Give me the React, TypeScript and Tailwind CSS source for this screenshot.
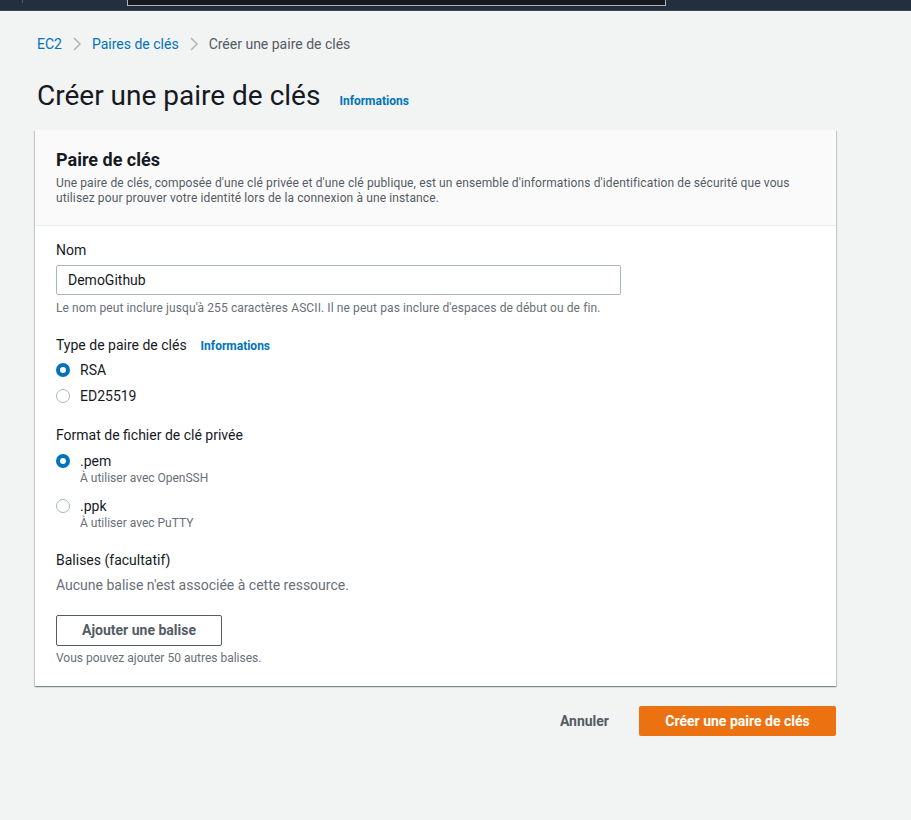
// Page EC2 : créer une paire de clés
export default function App() {
  const font = { fontFamily: 'Roboto, "Liberation Sans", sans-serif' };

  return (
    <div className="min-h-[820px] bg-[#f2f3f3] text-[#16191f]" style={font}>
      {/* barre de navigation (coupée en haut) */}
      <div className="h-[11px] bg-[#232f3e] border-b border-[#3b4654] relative">
        <div className="absolute left-[22px] top-0 h-[3px] w-px bg-[#545b64]" />
        <div className="absolute left-[127px] top-0 h-[6px] w-[539px] bg-[#16191f] border-x border-b border-[#aab7b8]" />
      </div>

      <div className="pl-[37px] pr-[75px]">
        {/* fil d'Ariane */}
        <nav className="flex items-center h-[22px] mt-[22px] text-[14px]">
          <span className="text-[#0073bb]">EC2</span>
          <Chevron />
          <span className="text-[#0073bb]">Paires de clés</span>
          <Chevron />
          <span className="text-[#545b64]">Créer une paire de clés</span>
        </nav>

        {/* titre */}
        <div className="flex items-baseline mt-[23px]">
          <h1 className="text-[28px] leading-[36px] font-normal">Créer une paire de clés</h1>
          <span className="ml-[19px] text-[12px] font-bold text-[#0073bb]">Informations</span>
        </div>

        {/* carte */}
        <div className="mt-[16px] ml-[-2px] w-[801px] bg-white shadow-[0_1px_1px_0_rgba(0,28,36,0.3),1px_1px_1px_0_rgba(0,28,36,0.15),-1px_1px_1px_0_rgba(0,28,36,0.15)]">
          <div className="bg-[#fafafa] border-b border-[#eaeded] px-[21px] pt-[19px] pb-[19px]">
            <h2 className="text-[18px] leading-[22px] font-bold">Paire de clés</h2>
            <p className="mt-[5px] text-[12px] leading-[15px] text-[#545b64] tracking-[0.12px]">
              Une paire de clés, composée d'une clé privée et d'une clé publique, est un ensemble d'informations d'identification de sécurité que vous utilisez pour prouver votre identité lors de la connexion à une instance.
            </p>
          </div>

          <div className="px-[21px] pt-[13px] pb-[20px]">
            <label className="block text-[14px] leading-[22px]">Nom</label>
            <div className="mt-[4px] w-[565px] h-[30px] border border-[#aab7b8] rounded-[2px] flex items-center px-[11px] text-[14px]">
              DemoGithub
            </div>
            <p className="mt-[6px] text-[12px] leading-[15px] text-[#687078] tracking-[0.1px]">
              Le nom peut inclure jusqu'à 255 caractères ASCII. Il ne peut pas inclure d'espaces de début ou de fin.
            </p>

            <div className="mt-[18px] flex items-baseline">
              <span className="text-[14px] leading-[22px]">Type de paire de clés</span>
              <span className="ml-[14px] text-[12px] font-bold text-[#0073bb]">Informations</span>
            </div>
            <div className="mt-[4px] flex flex-col gap-[6px]">
              <Radio checked label="RSA" />
              <Radio label="ED25519" />
            </div>

            <div className="mt-[18px] text-[14px] leading-[22px]">Format de fichier de clé privée</div>
            <div className="mt-[5px] flex flex-col gap-[11px]">
              <Radio checked label=".pem" sub="À utiliser avec OpenSSH" />
              <Radio label=".ppk" sub="À utiliser avec PuTTY" />
            </div>

            <div className="mt-[19px] text-[14px] leading-[22px]">Balises (facultatif)</div>
            <p className="mt-[3px] text-[14px] leading-[22px] text-[#687078]">Aucune balise n'est associée à cette ressource.</p>
            <button className="mt-[19px] w-[166px] h-[31px] border border-[#545b64] rounded-[2px] text-[14px] font-bold text-[#545b64] bg-white">
              Ajouter une balise
            </button>
            <p className="mt-[5px] text-[12px] leading-[15px] text-[#687078]">Vous pouvez ajouter 50 autres balises.</p>
          </div>
        </div>

        {/* actions */}
        <div className="w-[799px] flex justify-end items-center mt-[20px]">
          <button className="text-[14px] font-bold text-[#545b64] px-[20px] h-[30px]">Annuler</button>
          <button className="ml-[10px] w-[197px] h-[30px] bg-[#ec7211] rounded-[2px] text-[14px] font-bold text-white">
            Créer une paire de clés
          </button>
        </div>
      </div>
    </div>
  );
}

function Chevron() {
  return (
    <svg width="22" height="16" viewBox="0 0 22 16" className="mx-[4px]">
      <path d="M8 2l6 6-6 6" fill="none" stroke="#aab7b8" strokeWidth="1.5" />
    </svg>
  );
}

function Radio({ checked, label, sub }: { checked?: boolean; label: string; sub?: string }) {
  return (
    <div className="flex items-start">
      <div className="mt-[3px] w-[14px] h-[14px] shrink-0 rounded-full flex items-center justify-center">
        {checked ? (
          <div className="w-[14px] h-[14px] rounded-full border-[4px] border-[#0073bb] bg-white" />
        ) : (
          <div className="w-[14px] h-[14px] rounded-full border-[1.5px] border-[#aab7b8] bg-white" />
        )}
      </div>
      <div className="ml-[10px]">
        <div className="text-[14px] leading-[20px]">{label}</div>
        {sub && <div className="text-[12px] leading-[14px] text-[#687078]">{sub}</div>}
      </div>
    </div>
  );
}
